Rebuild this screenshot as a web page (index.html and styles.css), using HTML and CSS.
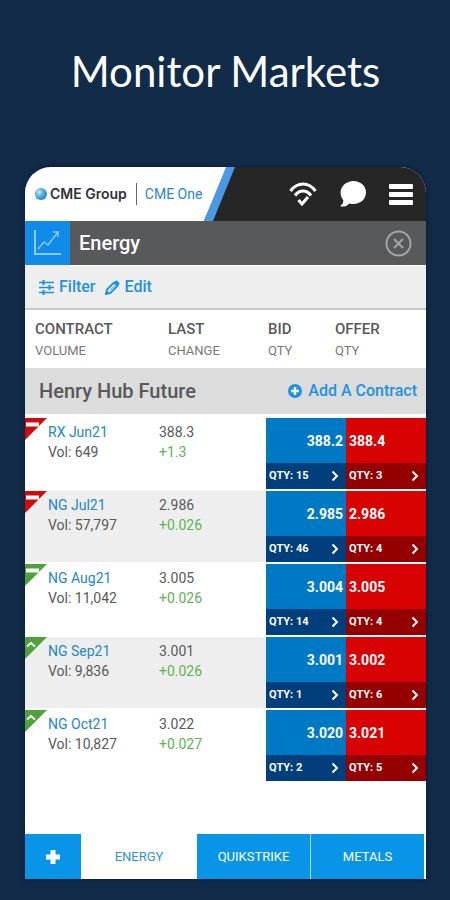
FILE: index.html
```html
<!DOCTYPE html>
<html lang="en">
<head>
<meta charset="utf-8">
<meta name="viewport" content="width=device-width, initial-scale=1">
<title>Monitor Markets</title>
<link rel="stylesheet" href="styles.css">
</head>
<body>
<svg class="defs" aria-hidden="true">
  <symbol id="chevron" viewBox="0 0 8 12"><path d="M1.5 1.5 6 6l-4.500 4.500" fill="none" stroke="currentColor" stroke-width="2"/></symbol>
  <symbol id="flat" viewBox="0 0 22 22"><path d="M0 0h22L0 22z" fill="currentColor"/><path d="M1 4.500h13v4H1z" fill="#fff"/></symbol>
  <symbol id="up" viewBox="0 0 22 22"><path d="M0 0h22L0 22z" fill="currentColor"/><path d="M2 9.500 6 6l4 3.500" fill="none" stroke="#fff" stroke-width="2"/></symbol>
</svg>
<h1 class="headline">Monitor Markets</h1>
<main class="phone">
  <header class="topbar">
    <div class="brand">
      <svg class="globe" viewBox="0 0 12 12" aria-hidden="true">
        <defs><radialGradient id="ball" cx=".35" cy=".35" r=".7"><stop offset="0" stop-color="#c9ecfa"/><stop offset=".45" stop-color="#58b5e4"/><stop offset="1" stop-color="#1f7fc0"/></radialGradient></defs>
        <circle cx="6" cy="6" r="6" fill="url(#ball)"/>
      </svg>
      <span class="brand-name">CME Group</span>
      <span class="product">CME One</span>
    </div>
    <svg class="slash" viewBox="0 0 31 54" preserveAspectRatio="none" aria-hidden="true"><path d="M0 0h23L0 54z" fill="#fff"/><path d="M22 0h9L9 54H0z" fill="#4999e4"/></svg>
    <nav class="top-actions">
      <button type="button" aria-label="Connection"><svg width="28" height="24" viewBox="0 0 28 24" fill="none" stroke="#fff" stroke-width="3"><path d="M1.500 9C8.500-.3 19.500-.3 26.500 9M6 13.500c4.500-6 11.500-6 16 0"/><path d="m9.500 18 3.500 4 6-7" stroke-width="3"/></svg></button>
      <button type="button" aria-label="Messages"><svg width="26" height="26" viewBox="0 0 26 26" fill="#fff"><path d="M13.500 0C20.500 0 26 5 26 11.500S20.500 23 13.500 23c-1.500 0-3-.2-4.300-.6C7 25 4 26 1 25.500c-.6-.1-.6-.8-.1-1.100C3 23 3.300 21 3.300 19.200 1.600 17.200.6 14.500.6 11.500.6 5 6.500 0 13.500 0z"/></svg></button>
      <button type="button" aria-label="Menu"><svg width="24" height="21" viewBox="0 0 24 21" fill="#fff"><rect width="24" height="5" rx="1"/><rect y="8" width="24" height="5" rx="1"/><rect y="16" width="24" height="5" rx="1"/></svg></button>
    </nav>
  </header>

  <section class="titlebar">
    <div class="chart-tile"><svg width="27" height="26" viewBox="0 0 27 26" fill="none" stroke="#8bcbf7" stroke-width="2" aria-hidden="true"><path d="M1 0v24h26"/><path d="m4 19 6-7 4 3 10-13M19 2h5v5" stroke-width="1.500"/></svg></div>
    <h2>Energy</h2>
    <button type="button" class="close" aria-label="Close"><svg width="27" height="27" viewBox="0 0 27 27" fill="none" stroke="#a3a5a8" stroke-width="2"><circle cx="13.500" cy="13.500" r="12" /><path d="m9 9 9 9m0-9-9 9"/></svg></button>
  </section>

  <div class="toolbar">
    <button type="button"><svg width="15" height="15" viewBox="0 0 15 15" fill="none" stroke="currentColor" stroke-width="1.500" aria-hidden="true"><path d="M0 2.500h15M0 7.500h15M0 12.500h15"/><path d="M4.500 0v5M10.500 5v5M4.500 10v5" stroke-width="2"/></svg>Filter</button>
    <button type="button"><svg width="15" height="15" viewBox="0 0 15 15" aria-hidden="true"><path d="M1 14l1-4.500 7-7L12.500 6l-7 7z" fill="none" stroke="currentColor" stroke-width="1.800"/><path d="m9 2.500 1.500-1.700c.5-.5 1.200-.5 1.700 0l2 2c.5.500.5 1.200 0 1.700L12.500 6zM0 15l1.500-5 3.500 3.500z" fill="currentColor"/><path d="m5 10.500 5-5" stroke="currentColor"/></svg>Edit</button>
  </div>

  <table class="quotes">
    <thead>
      <tr class="labels">
        <th scope="col">CONTRACT<small>VOLUME</small></th>
        <th scope="col">LAST<small>CHANGE</small></th>
        <th scope="col">BID<small>QTY</small></th>
        <th scope="col">OFFER<small>QTY</small></th>
      </tr>
    </thead>
    <tbody>
      <tr class="group">
        <th scope="rowgroup">Henry Hub Future</th>
        <td><button type="button"><svg width="14" height="14" viewBox="0 0 14 14" aria-hidden="true"><circle cx="7" cy="7" r="7" fill="currentColor"/><path d="M7 3v8M3 7h8" stroke="#fff" stroke-width="2.400"/></svg>Add A Contract</button></td>
      </tr>
      <tr class="quote">
        <td class="contract"><svg class="corner down"><use href="#flat"/></svg><a href="#rx-jun21">RX Jun21</a><span>Vol: 649</span></td>
        <td class="last"><span>388.3</span><span class="gain">+1.3</span></td>
        <td class="bid"><button type="button"><b>388.2</b><span>QTY: 15<svg><use href="#chevron"/></svg></span></button></td>
        <td class="offer"><button type="button"><b>388.4</b><span>QTY: 3<svg><use href="#chevron"/></svg></span></button></td>
      </tr>
      <tr class="quote">
        <td class="contract"><svg class="corner down"><use href="#flat"/></svg><a href="#ng-jul21">NG Jul21</a><span>Vol: 57,797</span></td>
        <td class="last"><span>2.986</span><span class="gain">+0.026</span></td>
        <td class="bid"><button type="button"><b>2.985</b><span>QTY: 46<svg><use href="#chevron"/></svg></span></button></td>
        <td class="offer"><button type="button"><b>2.986</b><span>QTY: 4<svg><use href="#chevron"/></svg></span></button></td>
      </tr>
      <tr class="quote">
        <td class="contract"><svg class="corner rise"><use href="#flat"/></svg><a href="#ng-aug21">NG Aug21</a><span>Vol: 11,042</span></td>
        <td class="last"><span>3.005</span><span class="gain">+0.026</span></td>
        <td class="bid"><button type="button"><b>3.004</b><span>QTY: 14<svg><use href="#chevron"/></svg></span></button></td>
        <td class="offer"><button type="button"><b>3.005</b><span>QTY: 4<svg><use href="#chevron"/></svg></span></button></td>
      </tr>
      <tr class="quote">
        <td class="contract"><svg class="corner rise"><use href="#up"/></svg><a href="#ng-sep21">NG Sep21</a><span>Vol: 9,836</span></td>
        <td class="last"><span>3.001</span><span class="gain">+0.026</span></td>
        <td class="bid"><button type="button"><b>3.001</b><span>QTY: 1<svg><use href="#chevron"/></svg></span></button></td>
        <td class="offer"><button type="button"><b>3.002</b><span>QTY: 6<svg><use href="#chevron"/></svg></span></button></td>
      </tr>
      <tr class="quote">
        <td class="contract"><svg class="corner rise"><use href="#up"/></svg><a href="#ng-oct21">NG Oct21</a><span>Vol: 10,827</span></td>
        <td class="last"><span>3.022</span><span class="gain">+0.027</span></td>
        <td class="bid"><button type="button"><b>3.020</b><span>QTY: 2<svg><use href="#chevron"/></svg></span></button></td>
        <td class="offer"><button type="button"><b>3.021</b><span>QTY: 5<svg><use href="#chevron"/></svg></span></button></td>
      </tr>
    </tbody>
  </table>

  <nav class="tabs">
    <button type="button" class="add" aria-label="Add tab"><svg width="14" height="14" viewBox="0 0 14 14" aria-hidden="true"><path d="M7 0v14M0 7h14" stroke="#fff" stroke-width="5"/></svg></button>
    <button type="button" class="active">ENERGY</button>
    <button type="button">QUIKSTRIKE</button>
    <button type="button">METALS</button>
  </nav>
</main>
</body>
</html>
```
FILE: styles.css
```css
* { box-sizing: border-box; }

body {
  margin: 0;
  min-height: 100vh;
  padding: 40px 24px 21px 25px;
  display: flex;
  flex-direction: column;
  background: #112b49;
  color: #58595b;
  font-family: Roboto, "Liberation Sans", sans-serif;
  font-size: 14px;
  line-height: 20px;
}

button {
  display: flex;
  align-items: center;
  margin: 0;
  padding: 0;
  border: 0;
  background: none;
  color: inherit;
  font: inherit;
  cursor: pointer;
}

a { color: #2387cb; text-decoration: none; }
svg { flex: none; display: block; }
.defs { position: absolute; width: 0; height: 0; }

.headline {
  margin: 0 0 65px;
  color: #fff;
  font: 400 42px/62px Lato, sans-serif;
  text-align: center;
}

.phone {
  flex: 1;
  display: flex;
  flex-direction: column;
  overflow: hidden;
  border-radius: 26px 26px 0 0;
  background: #fff;
  box-shadow: 0 0 5px #071a34;
}

.topbar { display: flex; height: 54px; background: #262626; }
.brand {
  display: flex;
  align-items: center;
  padding-left: 10px;
  background: #fff;
}
.globe { width: 12px; height: 12px; margin-right: 3px; }
.brand-name {
  padding-right: 9px;
  border-right: 1px solid #66686b;
  color: #303236;
  font: 600 14px/22px Inter, sans-serif;
}
.product { padding: 0 2px 0 8px; color: #2a86c7; font-size: 14px; }
.slash { width: 31px; height: 54px; }
.top-actions {
  flex: 1;
  display: flex;
  justify-content: flex-end;
  align-items: center;
  gap: 23px;
  padding-right: 13px;
}

.titlebar {
  display: flex;
  align-items: center;
  height: 44px;
  background: #58595b;
}
.chart-tile {
  display: grid;
  place-items: center;
  align-self: stretch;
  width: 45px;
  background: #118bea;
}
.titlebar h2 {
  flex: 1;
  margin: 0;
  padding-left: 9px;
  color: #fff;
  font-size: 20px;
  font-weight: 500;
}
.close { margin-right: 14px; }

.toolbar {
  display: flex;
  align-items: center;
  gap: 9px;
  height: 45px;
  padding-left: 14px;
  border-top: 1px solid #fff;
  border-bottom: 2px solid #c8c8c8;
  background: #eee;
  color: #1c93e2;
  font-size: 16px;
  font-weight: 500;
}
.toolbar button { gap: 5px; }

.quotes, .quotes thead, .quotes tbody { display: block; }
.quotes tr { display: grid; }
.quotes th, .quotes td { padding: 0; text-align: left; }

.quotes .labels {
  grid-template-columns: 133fr 100fr 67fr 91fr;
  align-items: center;
  height: 58px;
  padding: 2px 0 0 10px;
}
.labels th { font-size: 15px; font-weight: 500; line-height: 22px; }
.labels small { display: block; color: #77787a; font-size: 13px; font-weight: 400; }

.quotes .group {
  grid-template-columns: 1fr auto;
  align-items: center;
  height: 46px;
  margin-bottom: 4px;
  padding: 0 9px 0 14px;
  background: #dcdcdc;
}
.group th { font-size: 20px; font-weight: 500; }
.group button { gap: 6px; color: #1c93e2; font-size: 16px; font-weight: 500; }

.quotes .quote {
  grid-template-columns: 134fr 107fr 80fr 80fr;
  height: 71px;
  margin-bottom: 2px;
}
.quote:nth-child(odd) { background: #eee; }
.contract { position: relative; }
.quotes .contract { padding: 4px 0 0 23px; }
.quotes .last { padding-top: 4px; }
.contract a, .contract span, .last span { display: block; }
.last .gain { color: #5fb254; }
.corner { position: absolute; top: 0; left: 0; width: 22px; height: 22px; }
.down { color: #d20a0a; }
.rise { color: #4ea23c; }

.bid { background: #0079c4; }
.offer { background: #d90202; }
.bid button, .offer button {
  flex-direction: column;
  align-items: stretch;
  width: 100%;
  height: 100%;
  color: #fff;
}
.quote b {
  flex: 1;
  padding: 13px 3px 0;
  font-size: 14px;
  text-align: left;
}
.bid b { text-align: right; }
.quote button span {
  display: flex;
  align-items: center;
  justify-content: space-between;
  height: 26px;
  padding: 0 7px 0 3px;
  font-size: 11px;
  font-weight: 700;
}
.quote button svg { width: 8px; height: 12px; }
.bid button span { background: #003f7b; }
.offer button span { background: #940000; }

.tabs {
  display: grid;
  grid-template-columns: 56fr 116fr 113fr 114fr;
  height: 45px;
  margin-top: auto;
  padding-right: 2px;
}
.tabs button {
  justify-content: center;
  background: #0895e8;
  color: #fff;
  font-size: 13px;
}
.tabs .active { background: #fff; color: #3492dd; }
.tabs button:last-child { border-left: 1px solid #a9daf8; }
```
